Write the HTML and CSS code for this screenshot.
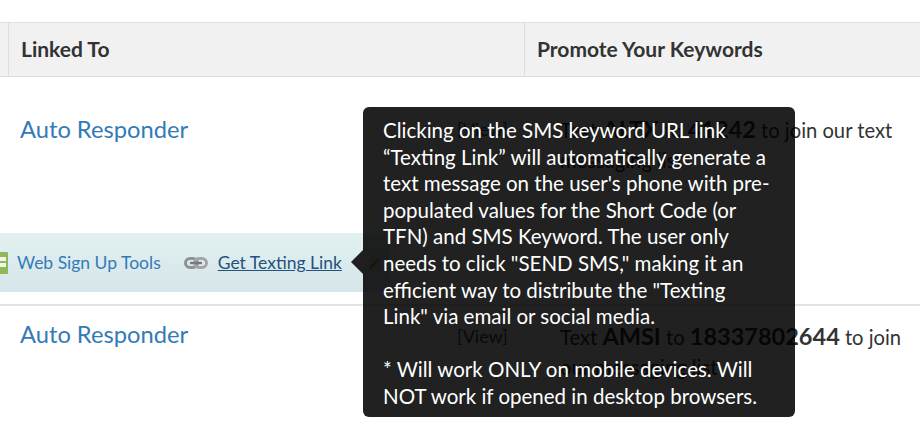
FILE: index.html
```html
<!DOCTYPE html>
<html lang="en">
<head>
  <meta charset="UTF-8">
  <meta name="viewport" content="width=device-width, initial-scale=1.0">
  <title>Keywords</title>
  <link rel="stylesheet" href="styles.css">
</head>
<body>
  <div class="table-head">
    <div class="head-stub"></div>
    <div class="head-cell head-linked">Linked To</div>
    <div class="head-cell head-promote">Promote Your Keywords</div>
  </div>

  <div class="row row-first">
    <a class="responder" href="#">Auto Responder</a>
    <a class="view" href="#">[View]</a>
    <p class="promote">Text <b>ALTX</b> to <b>41242</b> to join our text messaging list</p>
  </div>

  <div class="tools">
    <svg class="icon-form" width="10" height="24" viewBox="0 0 10 24">
      <rect x="-8" y="1" width="16" height="22" rx="1" fill="#8fb85c"/>
      <rect x="-6" y="6" width="12" height="4" fill="#f1f6e6"/>
      <rect x="-6" y="12" width="12" height="4" fill="#f1f6e6"/>
    </svg>
    <a class="tool-link" href="#">Web Sign Up Tools</a>
    <svg class="icon-chain" width="24" height="12" viewBox="0 0 24 12">
      <rect x="1.5" y="1.5" width="12" height="9" rx="4.5" fill="none" stroke="#8f9294" stroke-width="3"/>
      <rect x="10.5" y="1.5" width="12" height="9" rx="4.5" fill="none" stroke="#a2a5a6" stroke-width="3"/>
      <rect x="6" y="4.8" width="12" height="2.4" fill="#77797b"/>
    </svg>
    <a class="tool-link tool-active" href="#">Get Texting Link</a>
    <svg class="icon-pencil" width="14" height="18" viewBox="0 0 14 18">
      <rect x="2" y="1" width="11" height="12" fill="#d9d9d9"/>
      <path d="M11 6 L3 15 L1 17 L2 13 L9 5 Z" fill="#c8923c"/>
    </svg>
  </div>

  <div class="row row-second">
    <a class="responder" href="#">Auto Responder</a>
    <a class="view" href="#">[View]</a>
    <p class="promote">Text <b>AMSI</b> to <b>18337802644</b> to join our messaging list</p>
  </div>

  <div class="tooltip">
    <p>Clicking on the SMS keyword URL link “Texting Link” will automatically generate a text message on the user's phone with pre-populated values for the Short Code (or TFN) and SMS Keyword. The user only needs to click "SEND SMS," making it an efficient way to distribute the "Texting Link" via email or social media.</p>
    <p>* Will work ONLY on mobile devices. Will NOT work if opened in desktop browsers.</p>
  </div>
</body>
</html>
```

FILE: styles.css
```css
* {
  box-sizing: border-box;
}

html, body {
  height: 423px;
  overflow: hidden;
}

body {
  margin: 0;
  padding-top: 22px;
  position: relative;
  font-family: Lato, sans-serif;
  font-size: 20.5px;
  color: #333;
  background: #fff;
}

a {
  color: #337ab7;
  text-decoration: none;
}

.table-head {
  display: flex;
  height: 55px;
  background: #f1f1f1;
  border-top: 1px solid #ddd;
  border-bottom: 1px solid #ddd;
  font-weight: 700;
  font-size: 21px;
  line-height: 52px;
}

.head-stub {
  width: 9px;
  border-right: 1px solid #ddd;
}

.head-cell {
  padding-left: 12px;
}

.head-linked {
  width: 516px;
  border-right: 1px solid #ddd;
}

.row {
  display: flex;
  align-items: flex-start;
  padding-left: 20px;
}

.row-first {
  height: 156px;
  padding-top: 37px;
}

.row-second {
  flex: 1;
  padding-top: 13px;
  border-top: 2px solid #e4e4e4;
}

.responder {
  width: 437px;
  font-size: 23.7px;
  line-height: 30px;
}

.view {
  width: 103px;
  font-size: 18px;
  line-height: 30px;
  color: #23527c;
}

.promote {
  margin: 0;
  width: 345px;
  font-size: 20.2px;
  line-height: 30px;
}

.promote b {
  font-size: 23.5px;
}

.row-second .view,
.row-second .promote {
  padding-top: 2px;
}

.tools {
  display: flex;
  align-items: center;
  width: 390px;
  height: 59px;
  margin-bottom: 12px;
  background: linear-gradient(#e2f0f0, #d5e6ea);
  font-size: 17.5px;
}

.icon-form {
  margin-right: 7px;
}

.icon-chain {
  margin: 0 10px 0 23px;
}

.icon-pencil {
  margin-left: 26px;
}

.tool-active {
  color: #23527c;
  text-decoration: underline;
}

.tooltip {
  position: absolute;
  left: 363px;
  top: 107px;
  width: 432px;
  height: 310px;
  padding: 10px 20px;
  border-radius: 6px;
  background: rgba(0, 0, 0, 0.87);
  color: #fff;
  font-size: 20.5px;
  line-height: 26.6px;
}

.tooltip::before {
  content: "";
  position: absolute;
  left: -12px;
  top: 143px;
  border-style: solid;
  border-width: 12px 12px 12px 0;
  border-color: transparent #1f1f1f transparent transparent;
}

.tooltip p {
  margin: 0 0 26.6px;
}
```
